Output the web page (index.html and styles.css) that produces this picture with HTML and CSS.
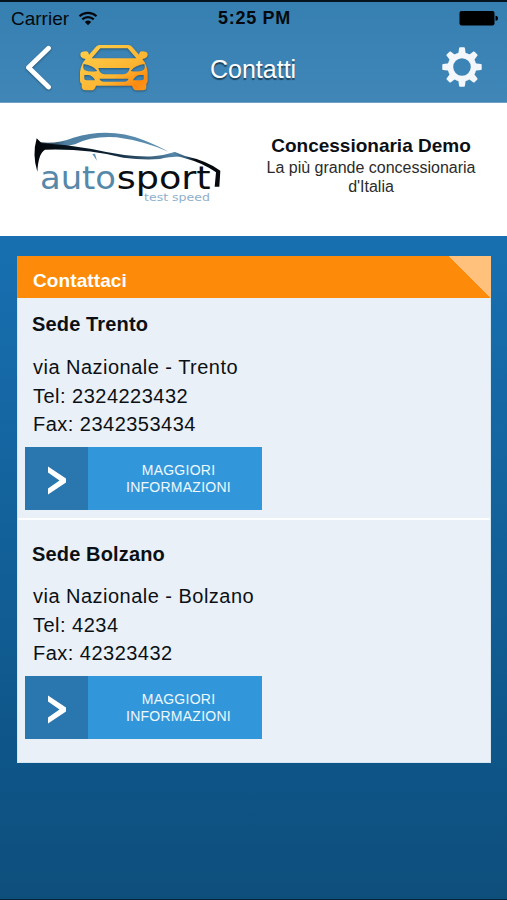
FILE: index.html
```html
<!DOCTYPE html>
<html lang="it">
<head>
    <meta charset="UTF-8">
    <title>Contatti</title>
    <link rel="stylesheet" href="styles.css">
</head>
<body>
<header class="topbar">
    <div class="status">
        <div class="carrier">
            <span>Carrier</span>
            <svg width="20" height="15" viewBox="0 0 20 15">
                <path d="M1.5 5.2A12.5 12.5 0 0 1 18.500 5.200M4.300 8.400A8.300 8.300 0 0 1 15.700 8.400" fill="none" stroke="#05090d" stroke-width="2.200"/>
                <path d="M6.800 11a4.800 4.800 0 0 1 6.400 0L10 14.200z" fill="#05090d"/>
            </svg>
        </div>
        <span class="time">5:25 PM</span>
        <div class="battery">
            <svg width="39" height="15" viewBox="0 0 39 15">
                <rect x="0.500" y="0" width="35" height="14.500" rx="2"/>
                <path d="M36.500 4.800q2.500 0 2.500 2.500t-2.500 2.500z"/>
            </svg>
        </div>
    </div>
    <nav class="nav">
        <svg class="back" width="28" height="48" viewBox="0 0 28 48">
            <path d="M24.500 4.200L4.500 23.500l20 19.500" fill="none" stroke="#fff" stroke-width="4.800" stroke-linecap="round" stroke-linejoin="round"/>
        </svg>
        <svg class="car" width="70" height="48" viewBox="12 18 210 144">
            <defs>
                <linearGradient id="gold" x1="0" y1="0" x2="1" y2="1">
                    <stop offset="0" stop-color="#ffcf4c"/>
                    <stop offset="0.600" stop-color="#fdb632"/>
                    <stop offset="0.850" stop-color="#ff8a10"/>
                    <stop offset="1" stop-color="#ff9820"/>
                </linearGradient>
            </defs>
            <path fill="url(#gold)" fill-rule="evenodd" d="M74 21H160q7 0 11 5L192 50q2-10 9-10 17 0 17 10 0 10-16 13 12 14 16 38V128q0 6-4 9v10q0 10-10 10H185q-10 0-14-14H63q-4 14-14 14H32q-12 0-12-12v-8q-5-3-5-9V101q4-24 17-38-16-3-16-13 0-10 17-10 7 0 9 10L63 26q4-5 11-5zM76 31L50 61H184L158 31zM26 78q-4 14 4 19 14 6 37 2-12-17-41-21zM208 78q4 14-4 19-14 6-37 2 12-17 41-21zM70 90q4 18 18 19h58q14-1 18-19zM28 111v13q3 3 8 3H60q-6-14-20-16zM206 111v13q-3 3-8 3h-24q6-14 20-16zM73 122q3 8 12 9h64q9-1 12-9z"/>
        </svg>
        <h1>Contatti</h1>
        <svg class="gear" width="42" height="42" viewBox="-21 -21 42 42">
            <circle r="11.600" fill="none" stroke="#f3f7fb" stroke-width="5.600"/>
            <g fill="#f3f7fb">
                <path id="tooth" d="M-3.800-12.500L-2.900-19q.2-.7 1-.7h3.800q.8 0 1 .7L3.800-12.500z"/>
                <use href="#tooth" transform="rotate(45)"/>
                <use href="#tooth" transform="rotate(90)"/>
                <use href="#tooth" transform="rotate(135)"/>
                <use href="#tooth" transform="rotate(180)"/>
                <use href="#tooth" transform="rotate(225)"/>
                <use href="#tooth" transform="rotate(270)"/>
                <use href="#tooth" transform="rotate(315)"/>
            </g>
        </svg>
    </nav>
</header>
<section class="dealer">
    <svg class="logo" width="220" height="100" viewBox="0 0 660 300">
        <defs>
            <linearGradient id="roof" x1="0" y1="0" x2="1" y2="0">
                <stop offset="0" stop-color="#16222f"/>
                <stop offset="0.200" stop-color="#4d80a2"/>
                <stop offset="1" stop-color="#5c8fb0"/>
            </linearGradient>
            <linearGradient id="side" x1="0" y1="0" x2="1" y2="0">
                <stop offset="0" stop-color="#02060a"/>
                <stop offset="0.500" stop-color="#0b2032"/>
                <stop offset="1" stop-color="#5f94b8"/>
            </linearGradient>
            <linearGradient id="hood" x1="0" y1="0" x2="1" y2="0">
                <stop offset="0" stop-color="#5f94b8"/>
                <stop offset="0.300" stop-color="#355e7c"/>
                <stop offset="0.500" stop-color="#05090d"/>
            </linearGradient>
        </defs>
        <path d="M60 82Q110 88 160 68 270 35 370 75q45 18 75 35Q370 78 290 67 215 62 165 88 130 98 60 97z" fill="url(#roof)"/>
        <path d="M50 70l15 15q75 3 150 17 115 26 185 22 30-2 62-12l28 12q-50 2-70 8-50 4-110-4Q200 100 75 104 55 115 52 170 36 120 50 70z" fill="url(#side)"/>
        <path d="M217 117l14 20-6-21z" fill="#5f94b8"/>
        <path d="M450 117l15-6 30 12q65 14 106 44l-3 48h-14l4-43q-38-28-88-41z" fill="url(#hood)"/>
        <text class="logo-name" x="60" y="221" textLength="228" lengthAdjust="spacingAndGlyphs" fill="#5688a9">auto</text>
        <text class="logo-name" x="290" y="221" textLength="282" lengthAdjust="spacingAndGlyphs" fill="#0a0d11">sport</text>
        <text class="logo-tag" x="372" y="257" textLength="198" lengthAdjust="spacingAndGlyphs" fill="#8fb0cb">test speed</text>
    </svg>
    <div class="dealer-text">
        <h2>Concessionaria Demo</h2>
        <p>La più grande concessionaria d'Italia</p>
    </div>
</section>
<main class="panel">
    <h3 class="panel-title">Contattaci</h3>
    <article class="office">
        <h4>Sede Trento</h4>
        <p>via Nazionale - Trento<br>Tel: 2324223432<br>Fax: 2342353434</p>
        <a class="more">
            <span class="more-icon">
                <svg width="20" height="30" viewBox="0 0 20 30"><path d="M1 0.500L19 12.500v4L1 28.500V22.500L12.500 14.500 1 6.500z" fill="#fff"/></svg>
            </span>
            <span class="more-label">MAGGIORI<br>INFORMAZIONI</span>
        </a>
    </article>
    <article class="office">
        <h4>Sede Bolzano</h4>
        <p>via Nazionale - Bolzano<br>Tel: 4234<br>Fax: 42323432</p>
        <a class="more">
            <span class="more-icon">
                <svg width="20" height="30" viewBox="0 0 20 30"><path d="M1 0.500L19 12.500v4L1 28.500V22.500L12.500 14.500 1 6.500z" fill="#fff"/></svg>
            </span>
            <span class="more-label">MAGGIORI<br>INFORMAZIONI</span>
        </a>
    </article>
</main>
</body>
</html>
```

FILE: styles.css
```css
*{
    margin: 0;
    padding: 0;
    box-sizing: border-box;
}
body{
    height: 900px;
    overflow: hidden;
    font-family: "Liberation Sans", Arial, sans-serif;
    color: #0c1014;
    background: linear-gradient(#1870b1 236px, #0e5588 763px, #0e4f7c 899px, #07223a 899px);
}
svg{
    display: block;
}
.topbar{
    height: 103px;
    border-top: 2px solid #05131d;
    border-bottom: 1px solid #6ea0c5;
    background: linear-gradient(#367fb1, #4087b8);
}
.status{
    display: grid;
    grid-template-columns: 1fr auto 1fr;
    align-items: center;
    height: 33px;
    padding: 0 9px 0 11px;
    font-size: 19px;
    color: #05090d;
}
.carrier{
    display: flex;
    align-items: center;
    gap: 9px;
}
.time{
    font-weight: bold;
    font-size: 18px;
    letter-spacing: 0.7px;
}
.battery{
    display: flex;
    justify-content: flex-end;
}
.nav{
    display: grid;
    grid-template-columns: 28px 70px 1fr 42px;
    align-items: center;
    height: 65px;
    padding: 0 24px;
}
.back{
    filter: drop-shadow(0 1px 1px rgba(0,0,0,.35));
}
.car{
    margin-left: 27px;
    filter: drop-shadow(0 1px 1px rgba(0,0,0,.35));
}
.nav h1{
    padding-left: 88px;
    padding-top: 3px;
    font-size: 25px;
    font-weight: normal;
    color: #fff;
    text-shadow: 0 2px 1px rgba(0,0,0,.5);
}
.gear{
    margin-top: -2px;
}
.dealer{
    display: flex;
    height: 133px;
    background: #fff;
}
.logo{
    margin: 12px 0 0 20px;
}
.logo-name{
    font-family: "DejaVu Sans", sans-serif;
    font-size: 98px;
}
.logo-tag{
    font-family: "DejaVu Sans", sans-serif;
    font-size: 31px;
}
.dealer-text{
    width: 234px;
    margin-left: 14px;
    padding-top: 31px;
    text-align: center;
}
.dealer-text h2{
    font-size: 19px;
    line-height: 24px;
}
.dealer-text p{
    font-size: 16px;
    line-height: 19px;
    color: #2b2b2b;
}
.panel{
    width: 474px;
    height: 507px;
    margin: 20px 0 0 17px;
    background: #eaf0f7;
    border: 1px solid #d5e5ef;
    border-top: 0;
}
.panel-title{
    height: 42px;
    margin: 0 -1px;
    padding-left: 16px;
    font-size: 19px;
    line-height: 50px;
    letter-spacing: 0.1px;
    color: #fff;
    background: linear-gradient(45deg, transparent 50%, #ffc17c 50%) right / 43px 42px no-repeat #fd8b09;
}
.office{
    height: 222px;
    padding: 14px 7px 0;
    border-bottom: 2px solid #fbfdfe;
}
.office h4{
    padding-left: 7px;
    font-size: 20px;
    line-height: 24px;
    letter-spacing: 0.15px;
}
.office p{
    margin-top: 17px;
    padding-left: 8px;
    font-size: 20px;
    line-height: 28.5px;
    letter-spacing: 0.48px;
}
.office + .office{
    border-bottom: 0;
    padding-top: 22px;
    height: auto;
}
.office + .office p{
    margin-top: 16px;
}
.more{
    display: flex;
    width: 237px;
    height: 63px;
    margin-top: 8px;
    color: #eef7fd;
    background: #3297da;
}
.more-icon{
    display: flex;
    align-items: center;
    width: 63px;
    padding: 5px 0 0 22px;
    background: #2a77af;
}
.more-label{
    flex: 1;
    padding: 15px 0 0 7px;
    font-size: 14px;
    line-height: 17px;
    letter-spacing: 0.25px;
    text-align: center;
}
```
